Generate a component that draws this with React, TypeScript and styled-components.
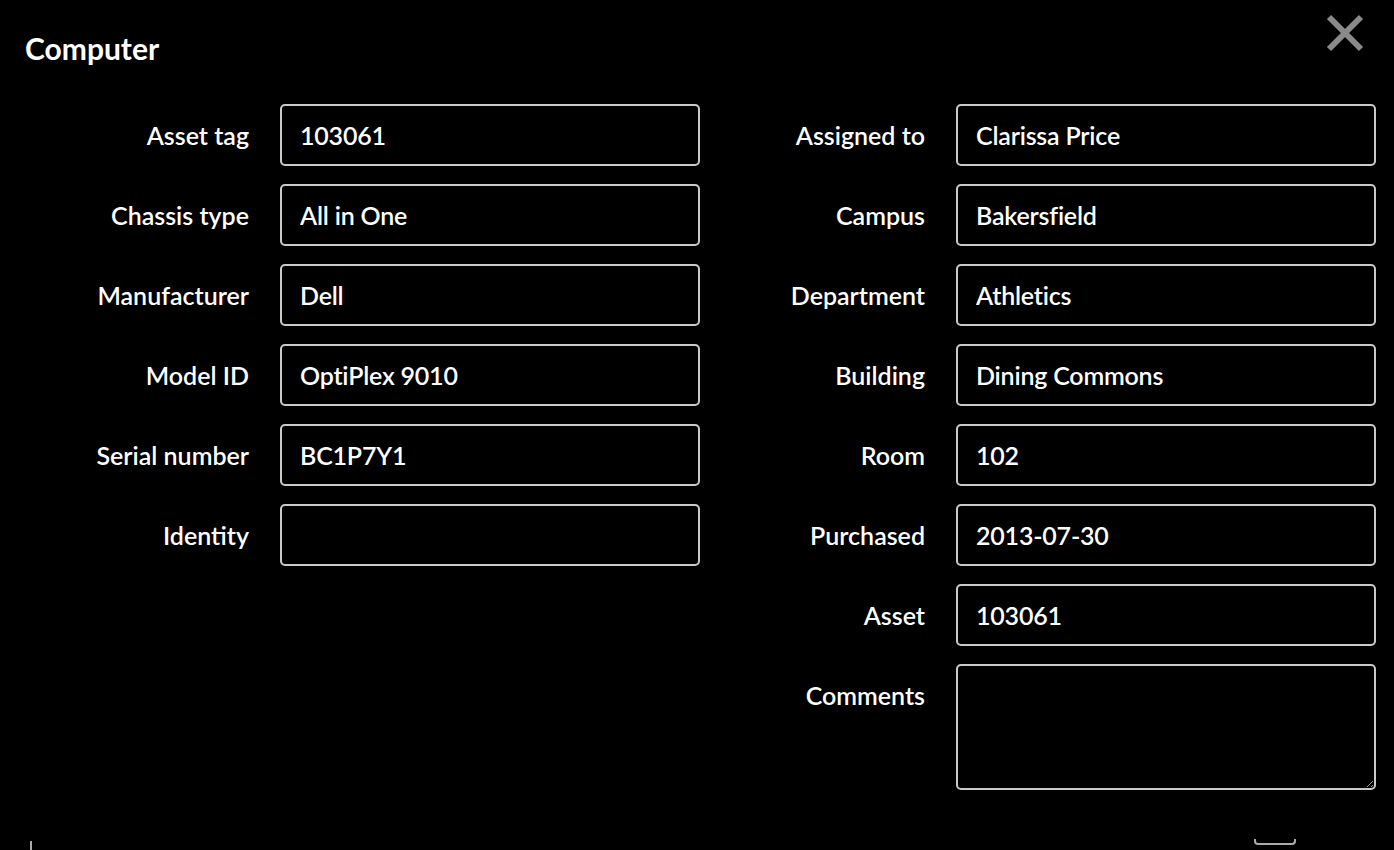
import React from 'react';
import styled, { createGlobalStyle } from 'styled-components';

const GlobalStyle = createGlobalStyle`
	html, body {
		margin: 0;
		padding: 0;
		background: #000;
		height: 850px;
		overflow: hidden;
	}

	body {
		font-family: 'Lato', 'Noto Sans', sans-serif;
		color: #fff;
	}
`;

const Modal = styled.div`
	position: relative;
	height: 850px;
	overflow: hidden;
`;

const Header = styled.header`
	display: flex;
	align-items: flex-start;
	justify-content: space-between;
	height: 100px;
	padding: 0 29px 0 25px;
	box-sizing: border-box;
`;

const Title = styled.h1`
	margin: 29px 0 0;
	font-size: 30px;
	font-weight: 700;
	line-height: 38px;
`;

const CloseButton = styled.button`
	margin-top: 13px;
	width: 40px;
	height: 40px;
	padding: 0;
	border: none;
	background: none;
	cursor: pointer;
`;

const Form = styled.form`
	display: flex;
	align-items: flex-start;
	margin-top: 4px;
`;

const Column = styled.div<{ $labelWidth: number }>`
	display: grid;
	grid-template-columns: ${props => props.$labelWidth}px 420px;
	column-gap: 31px;
	row-gap: 18px;
	align-items: center;
`;

const Label = styled.label<{ $top?: boolean }>`
	text-align: right;
	font-size: 25px;
	font-weight: 600;
	white-space: nowrap;
	align-self: ${props => (props.$top ? 'start' : 'center')};
	margin-top: ${props => (props.$top ? '16px' : '0')};
`;

const Input = styled.input`
	box-sizing: border-box;
	width: 420px;
	height: 62px;
	padding: 0 18px;
	border: 2px solid #c9c9c9;
	border-radius: 5px;
	background: #000;
	color: #fff;
	font-family: inherit;
	font-size: 25px;
	font-weight: 600;
	letter-spacing: -0.2px;
	outline: none;
`;

const TextArea = styled.textarea`
	box-sizing: border-box;
	width: 420px;
	height: 126px;
	padding: 14px 18px;
	border: 2px solid #c9c9c9;
	border-radius: 5px;
	background: #000;
	color: #fff;
	font-family: inherit;
	font-size: 25px;
	resize: vertical;
	outline: none;
	display: block;
`;

const Footer = styled.div`
	display: flex;
	justify-content: space-between;
	align-items: flex-start;
	margin-top: 51px;
	padding: 0 98px 0 30px;
`;

const Divider = styled.span`
	width: 2px;
	height: 20px;
	background: #aaa;
`;

const FooterBox = styled.span`
	width: 38px;
	height: 4px;
	border: 2px solid #aaa;
	border-top: none;
	border-radius: 0 0 4px 4px;
	margin-top: -2px;
`;

const leftFields = [
	['Asset tag', '103061'],
	['Chassis type', 'All in One'],
	['Manufacturer', 'Dell'],
	['Model ID', 'OptiPlex 9010'],
	['Serial number', 'BC1P7Y1'],
	['Identity', ''],
];

const rightFields = [
	['Assigned to', 'Clarissa Price'],
	['Campus', 'Bakersfield'],
	['Department', 'Athletics'],
	['Building', 'Dining Commons'],
	['Room', '102'],
	['Purchased', '2013-07-30'],
	['Asset', '103061'],
];

const toId = (label: string) => label.toLowerCase().replace(/\s+/g, '-');

export default function App() {
	return (
		<Modal>
			<GlobalStyle />
			<Header>
				<Title>Computer</Title>
				<CloseButton aria-label="Close">
					<svg width="40" height="40" viewBox="0 0 40 40">
						<path d="M4 4 L36 36 M36 4 L4 36" stroke="#8a8a8a" strokeWidth="6" />
					</svg>
				</CloseButton>
			</Header>
			<Form>
				<Column $labelWidth={249}>
					{leftFields.map(([label, value]) => (
						<React.Fragment key={label}>
							<Label htmlFor={toId(label)}>{label}</Label>
							<Input id={toId(label)} defaultValue={value} />
						</React.Fragment>
					))}
				</Column>
				<Column $labelWidth={225}>
					{rightFields.map(([label, value]) => (
						<React.Fragment key={label}>
							<Label htmlFor={toId(label)}>{label}</Label>
							<Input id={toId(label)} defaultValue={value} />
						</React.Fragment>
					))}
					<Label htmlFor="comments" $top>
						Comments
					</Label>
					<TextArea id="comments" />
				</Column>
			</Form>
			<Footer>
				<Divider />
				<FooterBox />
			</Footer>
		</Modal>
	);
}
